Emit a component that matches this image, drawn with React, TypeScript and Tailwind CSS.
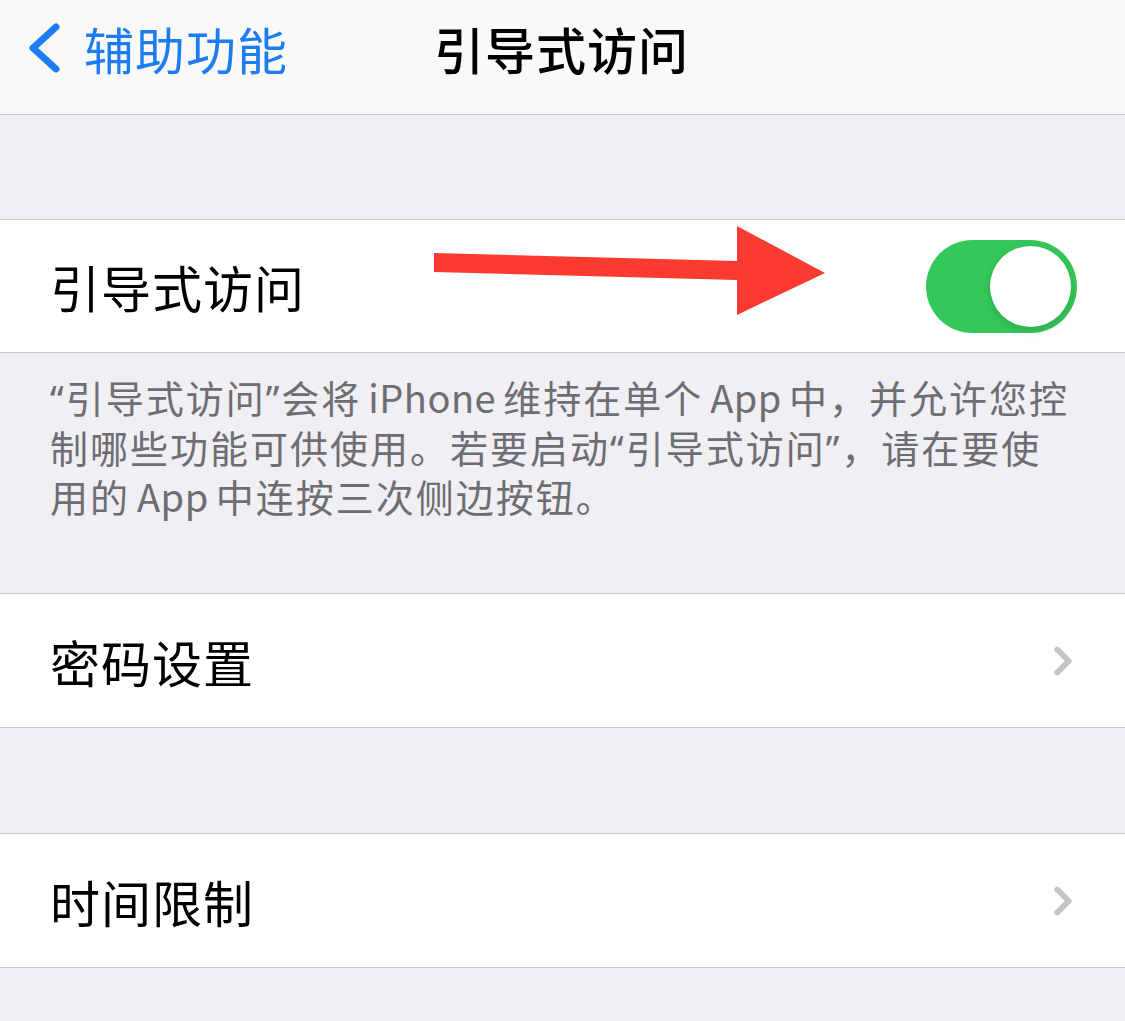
import { ChevronRight } from 'lucide-react';

const font = { fontFamily: '"Noto Sans CJK SC", "Noto Sans", sans-serif' };

// narrow western quote marks, as on iOS
function Q({ children }: { children: string }) {
  return <span style={{ fontFamily: '"Noto Sans", sans-serif' }}>{children}</span>;
}

// Latin words get a little breathing room next to CJK text
function L({ children }: { children: string }) {
  return <span className="mx-[7px] tracking-[0.5px]">{children}</span>;
}

function Toggle() {
  return (
    <div className="flex h-[93px] w-[151px] items-center justify-end rounded-full bg-[#34c759] p-[6px]">
      <div className="h-[81px] w-[81px] rounded-full bg-white shadow-[0_3px_8px_rgba(0,0,0,0.15)]" />
    </div>
  );
}

function Row({ label }: { label: string }) {
  return (
    <div className="flex h-[135px] items-center justify-between border-y border-[#c8c7cc] bg-white pl-[50px] pr-[50px]">
      <span className="text-[50px] leading-none tracking-[1px] text-black">{label}</span>
      <ChevronRight className="h-[46px] w-[46px] -mr-[11px] text-[#c4c4c7]" strokeWidth={3} />
    </div>
  );
}

export default function App() {
  return (
    <div className="min-h-screen bg-[#efeff4]" style={font}>
      <header className="grid h-[115px] grid-cols-[1fr_auto_1fr] items-center border-b border-[#c6c6c8] bg-[#f9f9f9] pb-[18px]">
        <div className="flex items-center gap-[22px] pl-[26px] text-[#1d7cf2]">
          <svg width="36" height="50" viewBox="0 0 36 50" fill="none">
            <path d="M30 4 L7 25 L30 46" stroke="currentColor" strokeWidth="7" strokeLinecap="round" strokeLinejoin="round" />
          </svg>
          <span className="text-[50px] leading-none tracking-[1px]">辅助功能</span>
        </div>
        <h1 className="-ml-[2px] text-[50px] font-medium leading-none tracking-[1px] text-black">引导式访问</h1>
        <div />
      </header>

      <div className="h-[104px]" />

      <div className="relative flex h-[134px] items-center justify-between border-y border-[#c8c7cc] bg-white pl-[50px] pr-[48px]">
        <span className="text-[50px] leading-none tracking-[1px] text-black">引导式访问</span>
        <Toggle />
        {/* red pointer drawn over the row */}
        <svg className="pointer-events-none absolute left-0 top-0" width="900" height="134" viewBox="0 0 900 134">
          <polygon points="434,33 737,41 737,6 825,53 737,95 737,60 434,52" fill="#fb3b30" />
        </svg>
      </div>

      <div className="h-[240px] whitespace-nowrap pl-[50px] pt-[20px] text-[38px] leading-[48.5px] tracking-[2px] text-[#6d6d72]">
        <Q>“</Q>引导式访问<Q>”</Q>会将<L>iPhone</L>维持在单个<L>App</L>中，并允许您控
        <br />
        制哪些功能可供使用。若要启动<Q>“</Q>引导式访问<Q>”</Q>，请在要使
        <br />
        用的<L>App</L>中连按三次侧边按钮。
      </div>

      <Row label="密码设置" />

      <div className="h-[105px]" />

      <Row label="时间限制" />
    </div>
  );
}
